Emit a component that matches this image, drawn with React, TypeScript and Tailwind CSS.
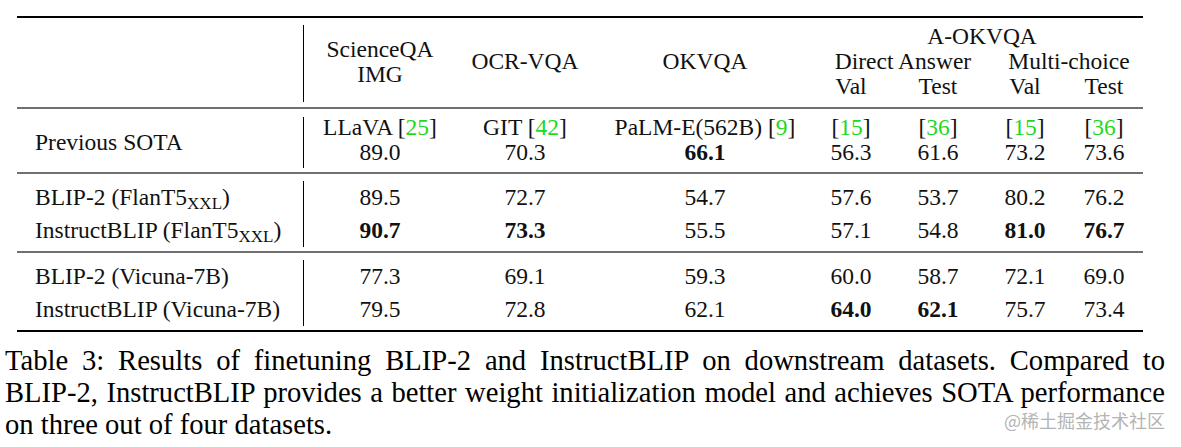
import React from 'react';

type Cell = { v: string; b?: boolean };

const COLS = 'grid grid-cols-[286px_1px_152px_138px_222px_70px_104px_70px_88px]';

const refs: [string, string][] = [
  ['LLaVA ', '25'],
  ['GIT ', '42'],
  ['PaLM-E(562B) ', '9'],
  ['', '15'],
  ['', '36'],
  ['', '15'],
  ['', '36'],
];

const sota: Cell[] = [
  { v: '89.0' },
  { v: '70.3' },
  { v: '66.1', b: true },
  { v: '56.3' },
  { v: '61.6' },
  { v: '73.2' },
  { v: '73.6' },
];

const c = (s: string): Cell[] =>
  s.split(' ').map((x) => (x.startsWith('*') ? { v: x.slice(1), b: true } : { v: x }));

const flan = [
  { name: 'BLIP-2 (FlanT5', sub: 'XXL', vals: c('89.5 72.7 54.7 57.6 53.7 80.2 76.2') },
  { name: 'InstructBLIP (FlanT5', sub: 'XXL', vals: c('*90.7 *73.3 55.5 57.1 54.8 *81.0 *76.7') },
];

const vicuna = [
  { name: 'BLIP-2 (Vicuna-7B)', vals: c('77.3 69.1 59.3 60.0 58.7 72.1 69.0') },
  { name: 'InstructBLIP (Vicuna-7B)', vals: c('79.5 72.8 62.1 *64.0 *62.1 75.7 73.4') },
];

const Rule = ({ thick }: { thick?: boolean }) => (
  <div className={thick ? 'w-[1126px] h-[2px] bg-black' : 'w-[1126px] h-[2px] bg-[#707070]'} />
);

const Cite = ({ n }: { n: string }) => (
  <>
    [<span className="text-[#1fd81f]">{n}</span>]
  </>
);

const App: React.FC = () => {
  return (
    <div className="w-[1181px] h-[447px] bg-white text-[#111] font-['Liberation_Serif','Times_New_Roman',serif] relative overflow-hidden">
      <div className="pt-[16px] pl-[17px]">
        <Rule thick />

        {/* header */}
        <div className={`${COLS} grid-rows-[25px_25px_25px] pt-[6px] pb-[8px] text-[23.5px] leading-[25px]`}>
          <div className="col-start-1 row-start-1 row-span-3" />
          <div className="col-start-2 row-start-1 row-span-3 bg-black mt-[1px] -mb-[3px]" />
          <div className="col-start-3 row-start-1 row-span-3 flex flex-col justify-center items-center">
            <span>ScienceQA</span>
            <span>IMG</span>
          </div>
          <div className="col-start-4 row-start-1 row-span-3 flex items-center justify-center">OCR-VQA</div>
          <div className="col-start-5 row-start-1 row-span-3 flex items-center justify-center">OKVQA</div>
          <div className="col-start-6 col-span-4 row-start-1 text-center">A-OKVQA</div>
          <div className="col-start-6 col-span-2 row-start-2 text-center">Direct Answer</div>
          <div className="col-start-8 col-span-2 row-start-2 text-center">Multi-choice</div>
          <div className="col-start-6 row-start-3 text-center">Val</div>
          <div className="col-start-7 row-start-3 text-center">Test</div>
          <div className="col-start-8 row-start-3 text-center">Val</div>
          <div className="col-start-9 row-start-3 text-center">Test</div>
        </div>

        <Rule />

        {/* previous sota */}
        <div className={`${COLS} pt-[6px] pb-[7px] text-[23.5px] leading-[25px]`}>
          <div className="row-span-2 pl-[18px] pt-[5px] flex items-center">Previous SOTA</div>
          <div className="row-span-2 bg-black mt-[2px] -mb-[3px]" />
          {refs.map(([t, n], i) => (
            <div key={'r' + i} className="text-center whitespace-nowrap">
              {t}
              <Cite n={n} />
            </div>
          ))}
          {sota.map((x, i) => (
            <div key={'s' + i} className={x.b ? 'text-center font-bold' : 'text-center'}>
              {x.v}
            </div>
          ))}
        </div>

        <Rule />

        {/* flan */}
        <div className={`${COLS} pt-[7px] pb-[4px] text-[23.5px] leading-[33px]`}>
          {flan.map((r, ri) => (
            <React.Fragment key={ri}>
              <div className="pl-[18px] whitespace-nowrap">
                {r.name}
                <sub className="text-[17px]">{r.sub}</sub>)
              </div>
              {ri === 0 && <div className="row-span-2 bg-black" />}
              {r.vals.map((x, i) => (
                <div key={i} className={x.b ? 'text-center font-bold' : 'text-center'}>
                  {x.v}
                </div>
              ))}
            </React.Fragment>
          ))}
        </div>

        <Rule />

        {/* vicuna */}
        <div className={`${COLS} pt-[7px] pb-[4px] text-[23.5px] leading-[33px]`}>
          {vicuna.map((r, ri) => (
            <React.Fragment key={ri}>
              <div className="pl-[18px] whitespace-nowrap">{r.name}</div>
              {ri === 0 && <div className="row-span-2 bg-black" />}
              {r.vals.map((x, i) => (
                <div key={i} className={x.b ? 'text-center font-bold' : 'text-center'}>
                  {x.v}
                </div>
              ))}
            </React.Fragment>
          ))}
        </div>

        <Rule thick />
      </div>

      {/* caption */}
      <div className="mt-[13px] pl-[5px] text-[28.6px] leading-[32px] text-black">
        <div className="w-[1160px] whitespace-nowrap text-justify [text-align-last:justify]">
          Table 3: Results of finetuning BLIP-2 and InstructBLIP on downstream datasets. Compared to
        </div>
        <div className="w-[1160px] whitespace-nowrap text-justify [text-align-last:justify]">
          BLIP-2, InstructBLIP provides a better weight initialization model and achieves SOTA performance
        </div>
        <div className="whitespace-nowrap">on three out of four datasets.</div>
      </div>

      <div className="absolute right-[16px] top-[411px] text-[18px] leading-none text-[#b4b4b4] font-['Noto_Sans_CJK_SC','Noto_Sans',sans-serif]">
        @稀土掘金技术社区
      </div>
    </div>
  );
};

export default App;
